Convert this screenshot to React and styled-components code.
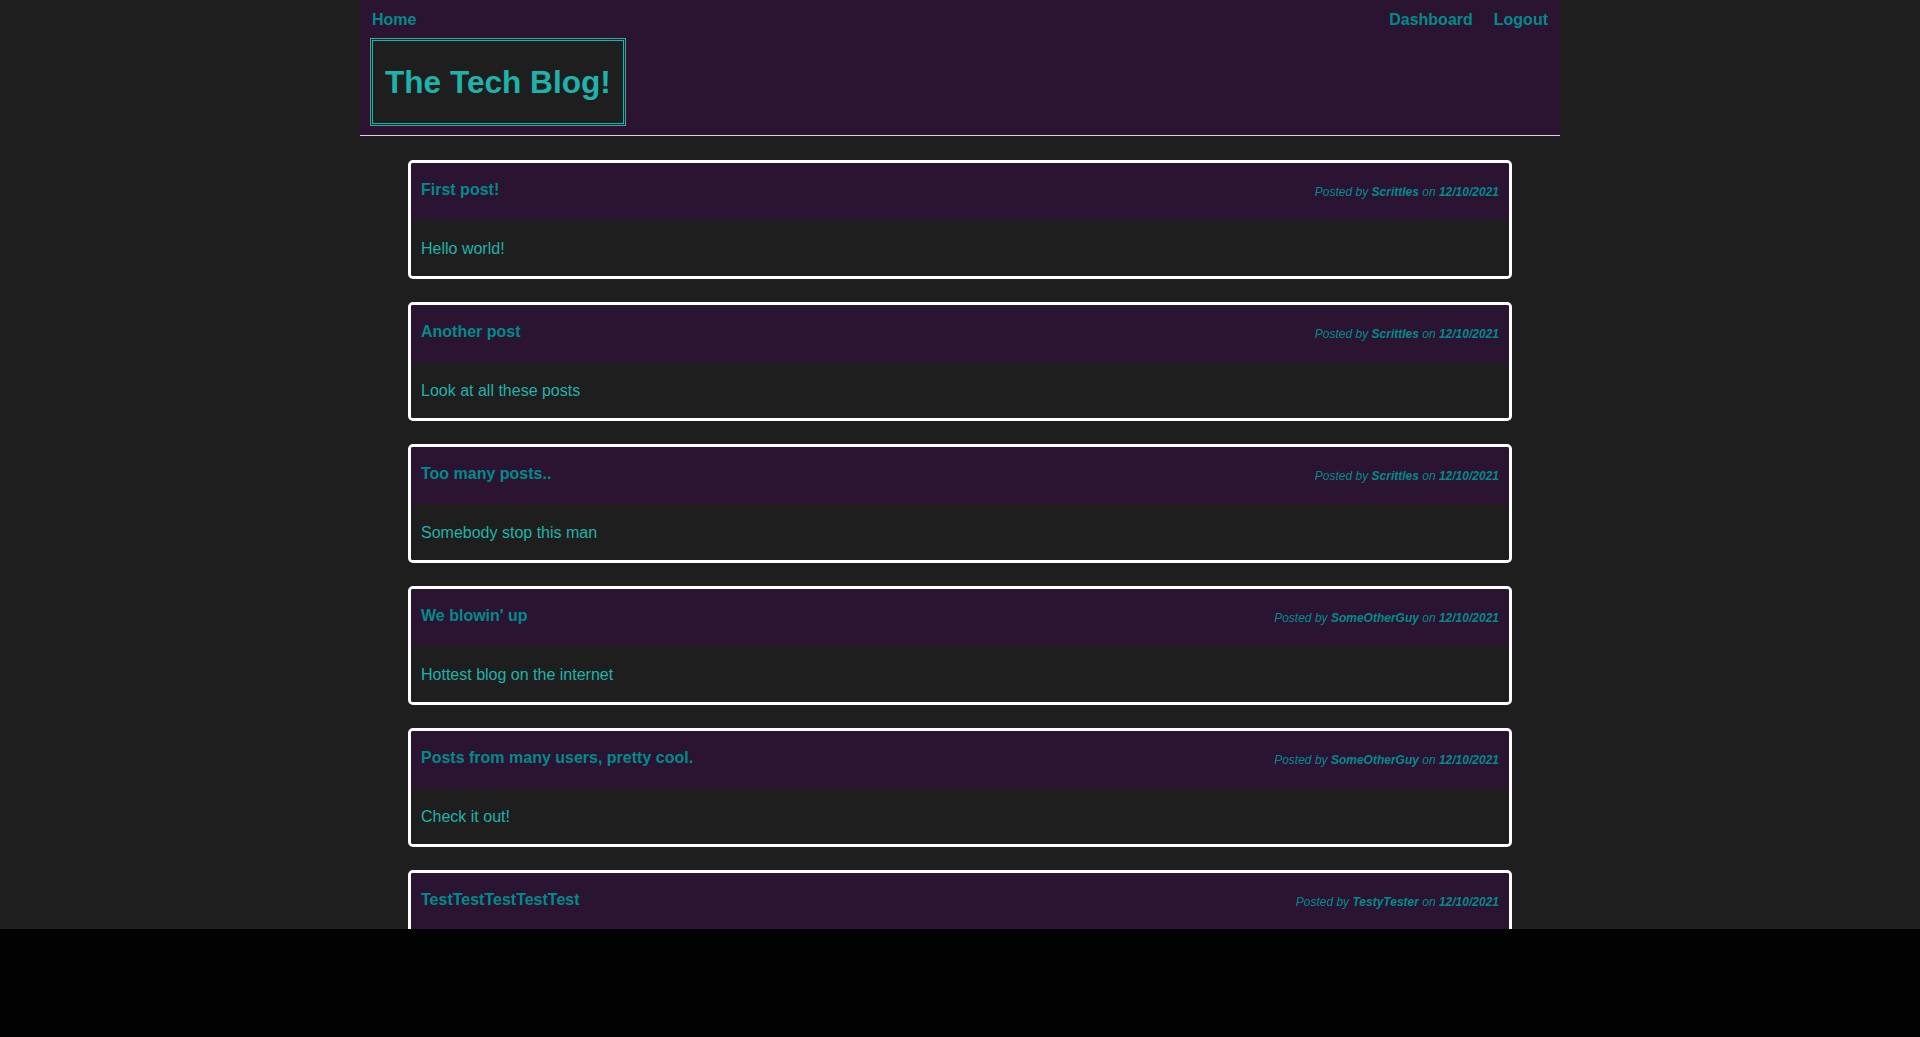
import React from 'react';
import styled, { createGlobalStyle } from 'styled-components';

const posts = [
  { title: 'First post!', body: 'Hello world!', author: 'Scrittles', date: '12/10/2021' },
  { title: 'Another post', body: 'Look at all these posts', author: 'Scrittles', date: '12/10/2021' },
  { title: 'Too many posts..', body: 'Somebody stop this man', author: 'Scrittles', date: '12/10/2021' },
  { title: "We blowin' up", body: 'Hottest blog on the internet', author: 'SomeOtherGuy', date: '12/10/2021' },
  { title: 'Posts from many users, pretty cool.', body: 'Check it out!', author: 'SomeOtherGuy', date: '12/10/2021' },
  { title: 'TestTestTestTestTest', body: '', author: 'TestyTester', date: '12/10/2021' },
];

const App = () => {
  return (
    <React.Fragment>
      <GlobalStyle />
      <Viewport>
        <StyledHeader>
          <NavBar>
            <NavLink href="#">Home</NavLink>
            <NavItems>
              <NavLink href="#">Dashboard</NavLink>
              <NavLink href="#">Logout</NavLink>
            </NavItems>
          </NavBar>
          <TitleBox>The Tech Blog!</TitleBox>
        </StyledHeader>
        <Main>
          {posts.map((post) => (
            <Card key={post.title}>
              <CardHeader>
                <CardTitle>{post.title}</CardTitle>
                <Meta>
                  Posted by <b>{post.author}</b> on <b>{post.date}</b>
                </Meta>
              </CardHeader>
              <CardBody>{post.body}</CardBody>
            </Card>
          ))}
        </Main>
      </Viewport>
      <BlackBar />
    </React.Fragment>
  );
};

const GlobalStyle = createGlobalStyle`
  html, body {
    margin: 0;
    padding: 0;
    background: #000;
  }
  * {
    box-sizing: border-box;
  }
`;

const Viewport = styled.div`
  height: 929px;
  overflow: hidden;
  background-color: #1e1e1e;
  font-family: 'Liberation Sans', Arial, sans-serif;
`;

const BlackBar = styled.div`
  height: 108px;
  background-color: #020202;
`;

const StyledHeader = styled.header`
  width: 1200px;
  margin: 0 auto;
  background-color: #2b1332;
  border-bottom: 1px solid #d8d8d8;
  padding-bottom: 9px;
`;

const NavBar = styled.nav`
  display: flex;
  justify-content: space-between;
  align-items: center;
  padding: 11px 12px 0;
  height: 29px;
`;

const NavItems = styled.div`
  display: flex;
  gap: 21px;
`;

const NavLink = styled.a`
  color: #008b8b;
  font-weight: bold;
  font-size: 16px;
  line-height: 18px;
  text-decoration: none;
`;

const TitleBox = styled.h1`
  display: inline-flex;
  align-items: center;
  height: 88px;
  margin: 9px 0 0 10px;
  padding: 0 12px;
  border: 3px double #20b2aa;
  background-color: #1e1e1e;
  color: #20b2aa;
  font-size: 31.6px;
  font-weight: bold;
`;

const Main = styled.main`
  width: 1200px;
  margin: 0 auto;
  padding: 24px 48px;
  display: flex;
  flex-direction: column;
  gap: 23px;
`;

const Card = styled.article`
  border: 3px solid #ffffff;
  border-radius: 5px;
  overflow: hidden;
`;

const CardHeader = styled.div`
  display: flex;
  justify-content: space-between;
  align-items: baseline;
  height: 57px;
  padding: 18px 10px 0;
  background-color: #2b1332;
`;

const CardTitle = styled.h3`
  margin: 0;
  color: #008b8b;
  font-size: 16px;
  line-height: 18px;
  font-weight: bold;
`;

const Meta = styled.span`
  color: #008b8b;
  font-size: 12px;
  font-style: italic;
  position: relative;
  top: 1px;
`;

const CardBody = styled.div`
  display: flex;
  align-items: center;
  height: 56px;
  padding: 2px 10px 0;
  background-color: #1e1e1e;
  color: #20b2aa;
  font-size: 16px;
`;

export default App;
